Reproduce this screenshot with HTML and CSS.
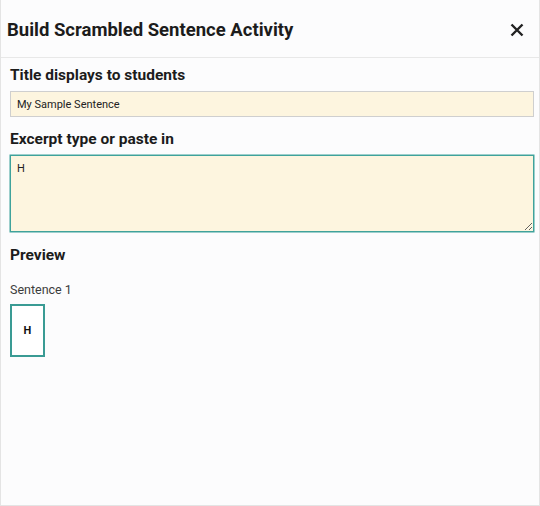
FILE: index.html
```html
<!DOCTYPE html>
<html lang="en">
<head>
<meta charset="utf-8">
<link rel="stylesheet" href="styles.css">
</head>
<body>
<div class="modal">
  <header class="modal-header">
    <h1 class="modal-title">Build Scrambled Sentence Activity</h1>
    <button class="close-btn" aria-label="Close">
      <svg width="14" height="14" viewBox="0 0 14 14"><path d="M1.5 1.5 L12.5 12.5 M12.5 1.5 L1.5 12.5" stroke="#222" stroke-width="2.4" stroke-linecap="butt"/></svg>
    </button>
  </header>
  <div class="modal-body">
    <label class="field-label">Title displays to students</label>
    <input class="text-input" type="text" value="My Sample Sentence">
    <label class="field-label excerpt-label">Excerpt type or paste in</label>
    <textarea class="text-area">H</textarea>
    <h2 class="section-title">Preview</h2>
    <div class="sentence-label">Sentence 1</div>
    <div class="tiles">
      <div class="tile">H</div>
    </div>
  </div>
</div>
</body>
</html>
```

FILE: styles.css
```css
* { box-sizing: border-box; }
html, body { margin: 0; padding: 0; }
body {
  font-family: Roboto, "Liberation Sans", sans-serif;
  background: #fcfcfd;
  color: #1e1e1e;
}
.modal {
  width: 540px;
  height: 506px;
  border: 1px solid #e4e4e4;
  border-top: none;
  background: #fcfcfd;
}
.modal-header {
  height: 58px;
  border-bottom: 1px solid #e8e8e8;
  display: flex;
  align-items: center;
  justify-content: space-between;
  padding: 2px 15px 0 6px;
}
.modal-title {
  margin: 0;
  font-size: 18.5px;
  font-weight: 700;
  color: #1c1c1c;
}
.close-btn {
  border: none;
  background: none;
  padding: 0;
  width: 14px;
  height: 14px;
  display: flex;
  cursor: pointer;
}
.modal-body {
  padding: 7px 5px 0 9px;
  display: flex;
  flex-direction: column;
  align-items: flex-start;
}
.field-label {
  font-size: 15.5px;
  font-weight: 700;
  color: #1c1c1c;
  line-height: 20px;
  margin: 0 0 6px 0;
}
.text-input {
  width: 100%;
  height: 26px;
  background: #fdf5df;
  border: 1px solid #cfcfcf;
  padding: 0 6px;
  font-family: Roboto, "Liberation Sans", sans-serif;
  font-size: 11px;
  color: #222;
  outline: none;
  margin: 0;
}
.excerpt-label { margin-top: 12px; margin-bottom: 6px; }
.text-area {
  width: 100%;
  height: 77px;
  background: #fdf5df;
  border: 1px solid #3fa29b;
  box-shadow: 0 0 0 0.5px #3fa29b;
  padding: 6px 6px;
  font-family: Roboto, "Liberation Sans", sans-serif;
  font-size: 11px;
  color: #222;
  margin: 0;
  resize: vertical;
  outline: none;
  display: block;
}
.section-title {
  margin: 13px 0 0 0;
  font-size: 15.5px;
  font-weight: 700;
  line-height: 20px;
  color: #1c1c1c;
}
.sentence-label {
  margin-top: 17px;
  font-size: 12.5px;
  font-weight: 400;
  color: #3c3c3c;
  line-height: 16px;
}
.tiles {
  display: flex;
  gap: 6px;
  margin-top: 6px;
}
.tile {
  width: 35px;
  height: 53px;
  border: 2px solid #3a9b94;
  background: #fff;
  display: flex;
  align-items: center;
  justify-content: center;
  font-size: 11px;
  font-weight: 700;
  color: #111;
}
```
